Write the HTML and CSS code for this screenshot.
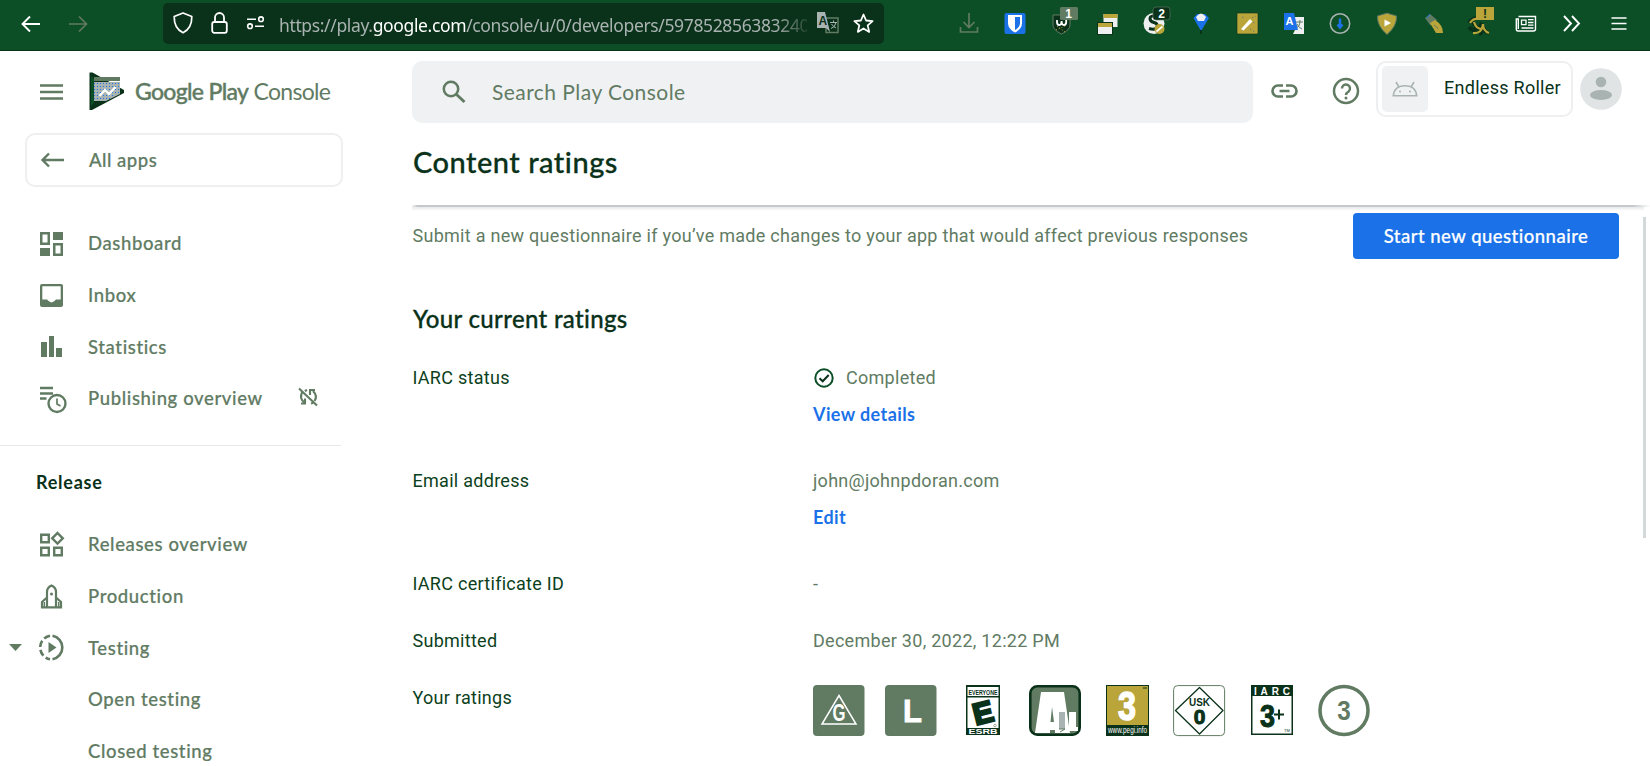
FILE: index.html
```html
<!DOCTYPE html>
<html lang="en">
<head>
<meta charset="utf-8">
<title>Content ratings | Google Play Console</title>
<link rel="stylesheet" href="styles.css">
</head>
<body>
<div class="browser">
  <svg class="nav-arrow" width="20" height="18" viewBox="0 0 20 18"><path d="M19 9H2M9 1.5 1.5 9 9 16.500" fill="none" stroke="#fff" stroke-width="1.900"/></svg>
  <svg class="nav-arrow forward" width="20" height="18" viewBox="0 0 20 18"><path d="M1 9h17M11 1.500 18.500 9 11 16.500" fill="none" stroke="#617b63" stroke-width="1.700"/></svg>
  <div class="url">
    <svg class="shield" width="20" height="22" viewBox="0 0 20 22"><path d="M10 1 18.800 4.500C19 12 16.500 17.500 10 20.700 3.500 17.500 1 12 1.200 4.500Z" fill="none" stroke="#fff" stroke-width="1.700" stroke-linejoin="round"/></svg>
    <svg class="lock" width="17" height="22" viewBox="0 0 17 22"><rect x="1.200" y="10" width="14.600" height="10.800" rx="2" fill="none" stroke="#fff" stroke-width="1.800"/><path d="M4 10V5.500a4.500 4.500 0 0 1 9 0V10" fill="none" stroke="#fff" stroke-width="1.800"/></svg>
    <svg class="perms" width="19" height="14" viewBox="0 0 19 14"><g fill="none" stroke="#fff" stroke-width="1.600"><path d="M1 3.200h9M9 10.200h9"/><circle cx="15" cy="3.200" r="2.300"/><circle cx="4" cy="10.200" r="2.300"/></g></svg>
    <span class="address">https://play.<b>google.com</b>/console/u/0/developers/597852856383240</span>
    <svg class="translate" width="22" height="22" viewBox="0 0 22 22"><rect x="9" y="6" width="12" height="14.500" fill="none" stroke="#617b63" stroke-width="1.500"/><path d="M13 10.500h7M16.500 8.500v2M19 10.500q-1 5-5 6M14.500 12q2 3 4.500 4" stroke="#a9b3b1" fill="none"/><path d="M0 0h8l5 20-4-4H0Z" fill="#a9b3b1"/><text x="1.500" y="12.500" font-size="12" font-weight="700" fill="#0a3119">A</text></svg>
    <svg class="star" width="21" height="21" viewBox="0 0 21 21"><path d="m10.500 1.500 2.600 6 6.500.600-4.900 4.300 1.500 6.500-5.700-3.400-5.700 3.400 1.500-6.500L1.400 8.100l6.500-.6Z" fill="none" stroke="#fff" stroke-width="1.800" stroke-linejoin="round"/></svg>
  </div>
  <div class="extensions">
    <svg viewBox="0 0 30 36"><path d="M15 7v14M9.500 16 15 21.500 20.500 16M6.500 21v5h17v-5" fill="none" stroke="#617b63" stroke-width="1.700"/></svg>
    <svg viewBox="0 0 30 36"><rect x="4.500" y="7" width="21" height="21" rx="2" fill="#1b72e8"/><path d="M8 9h14v8q0 6-7 9.500Q8 23 8 17Z" fill="#fff"/><path d="M15 11h5v6q0 4-5 7Z" fill="#1b72e8"/></svg>
    <svg viewBox="0 0 30 36"><path d="M6 9h17v10q0 5-8.500 9Q6 24 6 19Z" fill="#0a3119" stroke="#617b63"/><path d="M9 24l11-5M10 20l8 6" stroke="#b9a53a" stroke-dasharray="1 2"/><path d="M10 14v2q0 3 2.300 3t2.300-4q0 4 2.300 4t2.300-3v-2" fill="none" stroke="#fff" stroke-width="1.800"/><rect x="13" y="1" width="18" height="13" rx="1.500" fill="#617b63"/><text x="21.500" y="12" text-anchor="middle" font-size="12" font-weight="700" fill="#fff">1</text></svg>
    <svg viewBox="0 0 30 36"><rect x="10.500" y="8" width="14" height="13" fill="#eeeff1"/><rect x="10.500" y="8" width="14" height="4" fill="#b9a53a"/><rect x="4" y="16" width="16" height="13" fill="#0a3119"/><rect x="5" y="17" width="14" height="11" fill="#eeeff1"/><rect x="5" y="17" width="14" height="4" fill="#b9a53a"/></svg>
    <svg viewBox="0 0 30 36"><circle cx="14" cy="17.500" r="10.500" fill="#eeeff1"/><path d="M19 11q-9-2.500-9 1.500 0 3 4 4t3 4q-1 4-8 2" fill="none" stroke="#0a3119" stroke-width="3"/><circle cx="19.500" cy="23" r="5" fill="#b9a53a"/><path d="m16.500 25.500 6-5" stroke="#fff" stroke-width="1.700"/><rect x="13" y="1" width="17" height="13" rx="3" fill="#0a3119" stroke="#617b63" stroke-width=".6"/><text x="21.500" y="12" text-anchor="middle" font-size="12" font-weight="700" fill="#fff">2</text></svg>
    <svg viewBox="0 0 30 36"><path d="m7.500 12 3.500-4h8l4 4-8 13Z" fill="#1b72e8"/><path d="M10 11q5-7 10 0l-2 4h-6Z" fill="#eeeff1"/><path d="M15 24v4" stroke="#0a3119" stroke-width="2"/></svg>
    <svg viewBox="0 0 30 36"><rect x="5" y="7" width="21" height="21" rx="1" fill="#b9a53a" stroke="#0a3119" stroke-width=".6"/><path d="m9 23 9-10 2.500 2.500-9 9Z" fill="#fff"/><path d="m10 11 3 1m7 0 4-2M21 16l3 2m-6 5 5 3" stroke="#617b63" stroke-dasharray="1.500 2"/></svg>
    <svg viewBox="0 0 30 36"><path d="M16 11h9v17H14l2-4Z" fill="#eeeff1"/><path d="M17 16h7m-3-2q0 7-4 8m1-4q2 4 5 5" fill="none" stroke="#617b63"/><path d="M5 7h10l4 17H5Z" fill="#1b72e8"/><text x="6.500" y="19" font-size="11" font-weight="700" fill="#fff">A</text></svg>
    <svg viewBox="0 0 30 36"><circle cx="15" cy="17.500" r="9.700" fill="none" stroke="#a9b3b1" stroke-width="1.500"/><path d="M15 12.500v8m-2.500-2 2.500 3 2.500-3" fill="none" stroke="#1b72e8" stroke-width="2.500"/></svg>
    <svg viewBox="0 0 30 36"><path d="M15 7.200 24.500 10q.5 10-9.500 18.500Q5 20 5.500 10Z" fill="#b9a53a" stroke="#617b63" stroke-linejoin="round"/><path d="M12.500 13.500 19 17l-6.500 3.500Z" fill="#fff"/></svg>
    <svg viewBox="0 0 30 36"><path d="m7 12 5-4 7 6-3 6-4-1Z" fill="#617b63"/><path d="m9 12 3-4" stroke="#1b72e8"/><path d="m12 17 5-3q8 5 8 13h-7Z" fill="#b9a53a"/><path d="M16 19q3 2 4 4" stroke="#617b63" fill="none"/></svg>
    <svg viewBox="0 0 30 36"><path d="M4 17q3-5 9-5M4 21q5 6 11 0l2-4m-9-1q3 6 7 8m-1 4q4-1 4-8 1 6 6 7" fill="none" stroke="#0a3119" stroke-width="4"/><path d="M5 17q3-5 8-4m-4 3q2 7 8 7m-9 4q9 1 10-9 0 7 6 9" fill="none" stroke="#b9a53a" stroke-width="2.200"/><rect x="11" y="1" width="18" height="13" fill="#b9a53a"/><text x="20" y="11.500" text-anchor="middle" font-size="12" font-weight="700" fill="#0a3119">!</text></svg>
    <svg viewBox="0 0 30 36"><path d="M7.500 10.500h17v12.800q0 1.700-2 1.700H7q-1.700 0-1.700-2V13h2v10" fill="none" stroke="#fff" stroke-width="1.400"/><path d="M10.500 14.200h4.500v4.500h-4.500ZM17 13.700h5.500M17 16.500h5.500M17 19.200h5.500M10.500 22h12" fill="none" stroke="#fff" stroke-width="1.300"/></svg>
    <svg viewBox="0 0 30 36"><path d="m7 10 7 7.500L7 25m8-15 7 7.500-7 7.500" fill="none" stroke="#fff" stroke-width="1.900"/></svg>
    <svg viewBox="0 0 30 36"><path d="M7.500 12h15M7.500 17.500h15M7.500 23h15" stroke="#fff" stroke-width="1.600"/></svg>
  </div>
</div>

<div class="app">
  <aside class="sidebar">
    <div class="brand">
      <svg class="burger" width="24" height="16" viewBox="0 0 24 16"><path d="M0 1.500h23M0 8h23M0 14.500h23" stroke="#617b63" stroke-width="2.400"/></svg>
      <svg class="logo" width="36" height="39" viewBox="0 0 36 39"><path d="M.5.500h3L35 18v3L3 38H.5Z" fill="#0a3119"/><path d="M2 4v30l3-3V7Z" fill="#0c4f27"/><path d="M5 5h26v4H5Z" fill="#617b63"/><path d="M5 10h26v12L17 29H5Z" fill="#a9b3b1"/><path d="M5 11.500h26M5 14.500h26M5 17.500h26M5 20.500h26M5 23.500h21M5 26.500h16" stroke="#1b72e8" stroke-width="1" stroke-dasharray="1 2"/><path d="m10.500 24 5.500-6 4 4 6.500-7" fill="none" stroke="#fff" stroke-width="2.400"/></svg>
      <span class="brand-name"><b>Google Play</b> <i>Console</i></span>
    </div>
    <a class="all-apps">
      <svg width="24" height="16" viewBox="0 0 24 16"><path d="M24 8H2.500M9 1.500 2.500 8 9 14.500" fill="none" stroke="#617b63" stroke-width="2.400"/></svg>
      <span>All apps</span>
    </a>
    <nav class="menu">
      <a class="item"><svg viewBox="0 0 28 28"><path fill-rule="evenodd" fill="#617b63" d="M2 2h10v13H2ZM4.500 4.500v8h5v-8ZM15 2h10v8H15ZM2 18h10v8H2ZM15 13h10v13H15ZM17.500 15.500v8h5v-8Z"/></svg><span>Dashboard</span></a>
      <a class="item"><svg viewBox="0 0 28 28"><path fill-rule="evenodd" fill="#617b63" d="M4 2h19q2 0 2 2v19q0 2-2 2H4q-2 0-2-2V4q0-2 2-2ZM4.300 4.300V17.500H9q1.500 2 4.500 3 3-1 4.500-3h4.700V4.300Z"/></svg><span>Inbox</span></a>
      <a class="item"><svg viewBox="0 0 28 28"><path fill="#617b63" d="M3 9h6v15H3ZM11 3h5v21h-5ZM18 15h6v9h-6Z"/></svg><span>Statistics</span></a>
      <a class="item"><svg viewBox="0 0 28 28"><path d="M2 3h13M2 8.500h13M2 13.500h6.500" stroke="#617b63" stroke-width="2.300"/><circle cx="19" cy="18.500" r="8.500" fill="#fff" stroke="#617b63" stroke-width="2.400"/><path d="M19 13.500v5.500l3.500 2" fill="none" stroke="#617b63" stroke-width="1.700"/></svg><span>Publishing overview</span>
        <svg class="sync-off" viewBox="0 0 20 20"><g fill="none" stroke="#617b63" stroke-width="2.100"><path d="m1 1.500 18 17M7 16.500v-5M3 16.500h5M4 5.500q-3 6 2.500 10M12 8V3m-1 0h6m-2 1q5 5 1.500 10M13 16.500l2-.6M6.800 4 9 3"/></g></svg></a>
    </nav>
    <nav class="menu release">
      <h3>Release</h3>
      <a class="item"><svg viewBox="0 0 28 28"><g fill="none" stroke="#617b63" stroke-width="2.400"><path d="M3.200 3.700h7.600v7.600H3.200ZM3.200 16.700h7.600v7.600H3.200ZM16.200 16.700h7.600v7.600h-7.600ZM19.500 2l5.300 5.300-5.300 5.300-5.300-5.300Z"/></g></svg><span>Releases overview</span></a>
      <a class="item"><svg viewBox="0 0 28 28"><g fill="none" stroke="#617b63" stroke-width="2.200"><path d="M9 24.500V9q0-4.500 4.500-6.500Q18 4.500 18 9v15.500M9 14.500 4 19v5.400h19V19l-5-4.500"/><path d="M6.300 19v5M20.700 19v5" stroke-width="1.500"/></g><circle cx="13.500" cy="11" r="1.500" fill="#617b63"/></svg><span>Production</span></a>
      <a class="item"><svg class="caret" viewBox="0 0 14 8"><path d="M0 0h13L6.500 7Z" fill="#617b63"/></svg><svg viewBox="0 0 28 28"><path d="M14.500 1.700a12 12 0 0 1 0 23.600" fill="none" stroke="#617b63" stroke-width="2.600"/><path d="M12 1.700a12 12 0 0 0 0 23.600" fill="none" stroke="#617b63" stroke-width="2.600" stroke-dasharray="6.500 3"/><path d="M10.500 8v11l8-5.500Z" fill="#617b63"/></svg><span>Testing</span></a>
      <a class="item sub"><span>Open testing</span></a>
      <a class="item sub"><span>Closed testing</span></a>
    </nav>
  </aside>

  <main class="main">
    <header class="top">
      <div class="search">
        <svg width="24" height="24" viewBox="0 0 24 24"><circle cx="9" cy="9" r="7.200" fill="none" stroke="#617b63" stroke-width="2.500"/><path d="m14 14 8.500 8" stroke="#617b63" stroke-width="3"/></svg>
        <span>Search Play Console</span>
      </div>
      <svg class="link" width="27" height="14" viewBox="0 0 27 14"><path d="M12 1.500H7a5.500 5.500 0 0 0 0 11h5M15 1.500h5a5.500 5.500 0 0 1 0 11h-5M8.500 7h10" fill="none" stroke="#617b63" stroke-width="2.700"/></svg>
      <svg class="help" width="28" height="28" viewBox="0 0 28 28"><circle cx="14" cy="14" r="12" fill="none" stroke="#617b63" stroke-width="2.500"/><path d="M10 11.500a4 4 0 1 1 6.600 3q-2.600 1.600-2.600 3.500" fill="none" stroke="#617b63" stroke-width="2.400"/><circle cx="14" cy="21" r="1.500" fill="#617b63"/></svg>
      <div class="chip">
        <div class="thumb"><svg width="26" height="16" viewBox="0 0 26 16"><path d="M1.300 14.700q1-10 11.700-10t11.700 10ZM4 1l3 5M22 1l-3 5" fill="none" stroke="#a9b3b1" stroke-width="1.600"/><circle cx="8" cy="10.500" r="1" fill="#a9b3b1"/><circle cx="18" cy="10.500" r="1" fill="#a9b3b1"/></svg></div>
        <span>Endless Roller</span>
      </div>
      <svg class="avatar" width="42" height="42" viewBox="0 0 42 42"><circle cx="21" cy="21" r="20.800" fill="#e0e4e5"/><circle cx="21" cy="14" r="5.300" fill="#a9b3b1"/><ellipse cx="21" cy="27" rx="11" ry="5" fill="#a9b3b1"/></svg>
    </header>
    <h1>Content ratings</h1>
    <section class="panel">
      <div class="content">
        <div class="notice">
          <p>Submit a new questionnaire if you’ve made changes to your app that would affect previous responses</p>
          <button>Start new questionnaire</button>
        </div>
        <h2>Your current ratings</h2>
        <dl>
          <div class="row tall"><dt>IARC status</dt><dd><span class="done"><svg width="22" height="22" viewBox="0 0 22 22"><circle cx="11" cy="11" r="8.700" fill="none" stroke="#0c4f27" stroke-width="2"/><path d="m6.500 11.300 3.200 3 6-6.300" fill="none" stroke="#0a3119" stroke-width="2"/></svg><span>Completed</span></span><a>View details</a></dd></div>
          <div class="row tall"><dt>Email address</dt><dd><span>john@johnpdoran.com</span><a>Edit</a></dd></div>
          <div class="row"><dt>IARC certificate ID</dt><dd><span>-</span></dd></div>
          <div class="row"><dt>Submitted</dt><dd><span>December 30, 2022, 12:22 PM</span></dd></div>
          <div class="row"><dt>Your ratings</dt><dd class="badges">
            <svg width="52" height="52" viewBox="0 0 52 52"><rect width="51.500" height="51" rx="4" fill="#617b63"/><path d="M26 10.500 43 39H9Z" fill="none" stroke="#fff" stroke-width="1.500"/><text x="26" y="36" text-anchor="middle" font-size="23" font-weight="700" fill="#fff" textLength="13" lengthAdjust="spacingAndGlyphs">G</text></svg>
            <svg width="52" height="52" viewBox="0 0 52 52"><rect width="51.500" height="51" rx="4" fill="#617b63"/><text x="18" y="36.500" font-size="31" font-weight="700" fill="#fff" stroke="#fff" stroke-width=".8">L</text></svg>
            <svg width="34" height="52" viewBox="0 0 34 52"><rect width="34" height="50" fill="#0a3119"/><path d="M1.500 2h31v9h-31ZM1.500 12.500h31V43h-31Z" fill="#fff"/><text x="17" y="9.700" text-anchor="middle" font-size="8" font-weight="700" fill="#0a3119" textLength="29" lengthAdjust="spacingAndGlyphs">EVERYONE</text><text x="17" y="38" text-anchor="middle" font-size="30" font-weight="700" fill="#0a3119" stroke="#0a3119" stroke-width="2.500" transform="rotate(-14 17 28)">E</text><text x="17" y="49" text-anchor="middle" font-size="7" font-weight="700" fill="#fff" textLength="29" lengthAdjust="spacingAndGlyphs">ESRB</text><circle cx="29" cy="40.500" r="1.300" fill="none" stroke="#617b63" stroke-width=".6"/></svg>
            <svg width="52" height="52" viewBox="0 0 52 52"><rect x="1.300" y="1.300" width="49.400" height="48.400" rx="7" fill="#617b63" stroke="#0a3119" stroke-width="2.600"/><path fill-rule="evenodd" d="M12 7h23l6 41H26v-3h-5v3H6ZM23 22l-1.500 15H25Z" fill="#fff"/><path d="M30 27h6v17h-6Z" fill="#a9b3b1"/><path d="M40 27h7v15h2v4H36v-4h4Z" fill="#fff"/><path d="M30 44h6l-5 3" stroke="#617b63" fill="none"/></svg>
            <svg width="43" height="52" viewBox="0 0 43 52"><rect width="43" height="51" fill="#0a3119"/><rect x="1" y="1" width="41" height="39" fill="#b9a53a"/><text x="21" y="35" text-anchor="middle" font-size="40" font-weight="700" fill="#fff" stroke="#fff" stroke-width="1.500" textLength="18" lengthAdjust="spacingAndGlyphs">3</text><text x="21.500" y="48" text-anchor="middle" font-size="8.500" fill="#fff" textLength="39" lengthAdjust="spacingAndGlyphs">www.pegi.info</text><path d="M37 3h4" stroke="#0a3119"/></svg>
            <svg width="53" height="52" viewBox="0 0 53 52"><rect x=".6" y=".6" width="51" height="50" rx="4" fill="#fff" stroke="#617b63"/><path d="M26.500 2.500 50 25.500 26.500 49 2.500 25.500Z" fill="none" stroke="#0a3119" stroke-width="1.300" stroke-linejoin="round"/><text x="26.500" y="21" text-anchor="middle" font-size="10" font-weight="700" fill="#0a3119" textLength="21" lengthAdjust="spacingAndGlyphs">USK</text><text x="26.500" y="39" text-anchor="middle" font-size="21" font-weight="700" fill="#0a3119" stroke="#0a3119">0</text></svg>
            <svg width="42" height="52" viewBox="0 0 42 52"><rect width="42" height="50" fill="#0a3119"/><rect x="1.500" y="11" width="39" height="37.500" fill="#fff"/><text x="3" y="9.500" font-size="10" font-weight="700" fill="#fff" textLength="36">IARC</text><text x="9" y="41.500" font-size="32" font-weight="700" fill="#0a3119" stroke="#0a3119" textLength="15" lengthAdjust="spacingAndGlyphs">3</text><path d="M23 29.500h10M28 24.500v10" stroke="#0a3119" stroke-width="2"/><text x="33" y="47" font-size="4" fill="#0a3119">TM</text></svg>
            <svg width="52" height="52" viewBox="0 0 52 52"><circle cx="26" cy="25.500" r="24" fill="none" stroke="#617b63" stroke-width="3.600"/><text x="26" y="34.500" text-anchor="middle" font-size="28" font-weight="700" fill="#617b63" textLength="13.500" lengthAdjust="spacingAndGlyphs">3</text></svg>
          </dd></div>
        </dl>
      </div>
      <div class="scrollbar"></div>
    </section>
  </main>
</div>
</body>
</html>
```
FILE: styles.css
```css
* { box-sizing: border-box; }
html, body { margin: 0; height: 100%; overflow: hidden; }
body { background: #fff; color: #617b63; font-family: Roboto, "Liberation Sans", sans-serif; font-size: 18px; letter-spacing: .28px; }
svg { display: block; flex: none; overflow: visible; font-family: "Liberation Sans", sans-serif; letter-spacing: 0; }
h1, h2, h3, p, dl, dt, dd { margin: 0; }

.browser { display: flex; align-items: center; height: 51px; padding-right: 8px; background: #0c4f27; border-bottom: 1px solid #0a3119; }
.nav-arrow { margin: -2px 0 0 21px; }
.nav-arrow.forward { margin-left: 27px; }
.url { display: flex; align-items: center; width: 721px; height: 41px; margin: -4px 0 0 75px; padding-left: 10px; border-radius: 5px; background: #0a3119; }
.lock { margin-left: 18px; }
.perms { margin-left: 18px; }
.address { width: 528px; margin-left: 14px; padding-top: 3px; white-space: nowrap; font-family: "Noto Sans", "Open Sans", sans-serif; font-size: 17.5px; letter-spacing: -.36px; color: #a9b3b1; -webkit-mask-image: linear-gradient(90deg, #000 94%, transparent 101%); mask-image: linear-gradient(90deg, #000 94%, transparent 101%); }
.address b { font-weight: 400; color: #fff; }
.translate { margin-left: 10px; }
.star { margin-left: 14px; }
.extensions { display: grid; grid-template-columns: repeat(15, 46.43px); justify-items: center; margin: -2px 0 0 auto; }
.extensions svg { width: 30px; height: 36px; }

.app { display: flex; height: 715px; }
.sidebar { width: 412px; flex: none; font-family: Lato, Roboto, sans-serif; letter-spacing: .62px; }
.brand { display: flex; align-items: center; height: 82px; padding: 0 0 2px 40px; }
.burger { margin-top: 1px; }
.logo { margin-left: 25px; }
.brand-name { margin-left: 10px; font-size: 23px; letter-spacing: -.68px; white-space: nowrap; }
.brand-name b { font-weight: 500; -webkit-text-stroke: .4px #617b63; }
.brand-name i { font-style: normal; font-weight: 400; }
.all-apps { display: flex; align-items: center; gap: 25px; width: 318px; height: 54px; margin-left: 25px; padding: 0 0 1px 15px; border: 2px solid #eeeff1; border-radius: 10px; font-size: 18.500px; font-weight: 500; letter-spacing: .5px; -webkit-text-stroke: .2px #617b63; }
.all-apps svg { margin-left: -2px; }
.menu { width: 341px; padding-top: 31px; height: 259px; border-bottom: 1px solid #e6e8ea; }
.item { display: flex; align-items: center; height: 51.700px; padding-left: 38px; font-size: 18.500px; font-weight: 500; white-space: nowrap; -webkit-text-stroke: .2px #617b63; }
.item span { margin-top: -1px; }
.item svg { width: 28px; height: 28px; margin-right: 22px; }
.item .sync-off { width: 20px; height: 20px; margin: -4px 0 0 35px; }
.item .caret { width: 14px; height: 8px; margin: 0 15px 0 -29px; }
.item.sub { padding-left: 88px; }
.release { height: 320px; border: 0; padding-top: 24px; }
.release h3 { height: 49px; padding-left: 36px; font-size: 18px; line-height: 24px; letter-spacing: .75px; color: #0a3119; }

.main { flex: 1; min-width: 0; }
.top { display: flex; align-items: center; height: 72px; padding-top: 8px; }
.search { display: flex; align-items: center; gap: 26px; width: 841px; height: 62px; margin-top: 1px; padding-left: 30px; border-radius: 10px; background: #f0f1f3; font-family: Lato, sans-serif; font-size: 21px; letter-spacing: .45px; }
.search span { margin-top: -1px; }
.link { margin-left: 18px; }
.help { margin-left: 34px; }
.chip { display: flex; align-items: center; width: 197px; height: 56px; margin: -5px 0 0 16px; padding-left: 4px; border: 2px solid #eeeff1; border-radius: 10px; color: #0a3119; white-space: nowrap; }
.chip span { margin: -2px 0 0 1px; }
.thumb { display: grid; place-items: center; width: 46px; height: 46px; margin-right: 15px; border-radius: 5px; background: #f0f1f3; }
.avatar { margin: -5px 0 0 7px; }
h1 { height: 82px; padding: 21px 0 0 1px; font: 500 29px/36px Lato, sans-serif; letter-spacing: .5px; color: #0a3119; -webkit-text-stroke: .3px #0a3119; }
.panel { display: flex; justify-content: space-between; border-top: 2px solid #c3c9ca; border-image: linear-gradient(90deg, #fff, #c3c9ca .5% 98.500%, #fff) 1; background: linear-gradient(#e6e8ea, #fff) 0 0 / 99.500% 4px no-repeat; }
.content { width: 1207px; }
.notice { display: flex; align-items: center; justify-content: space-between; padding-top: 6px; }
.notice p { margin-top: -1px; padding-left: .5px; white-space: nowrap; }
button { width: 266px; height: 46px; border: 0; border-radius: 4px; background: #1b72e8; color: #fff; font: 500 18.500px Lato, sans-serif; letter-spacing: .48px; -webkit-text-stroke: .2px #fff; }
h2 { padding: 44px 0 0 1px; height: 105px; font: 500 24px/32px Lato, sans-serif; letter-spacing: .33px; color: #0a3119; -webkit-text-stroke: .3px #0a3119; }
.row { display: grid; grid-template-columns: 400px 1fr; height: 57px; line-height: 28px; }
.row.tall { height: 103px; }
.row dt { padding-left: .5px; color: #0c3f20; }
.row dd { display: flex; flex-direction: column; align-items: flex-start; gap: 8px; padding-left: 1px; white-space: nowrap; }
.row a { color: #1b72e8; font-family: Lato, sans-serif; font-weight: 700; letter-spacing: .4px; }
.done { display: flex; align-items: center; gap: 11px; }
.row .badges { flex-direction: row; gap: 0; padding: 1px 0 0 1px; }
.badges svg:nth-child(2) { margin-left: 20px; }
.badges svg:nth-child(3) { margin-left: 29px; }
.badges svg:nth-child(4) { margin-left: 29px; }
.badges svg:nth-child(5) { margin-left: 25px; }
.badges svg:nth-child(6) { margin-left: 24px; }
.badges svg:nth-child(7) { margin-left: 25px; }
.badges svg:nth-child(8) { margin-left: 25px; }
.scrollbar { width: 3px; height: 321px; margin: 10px 4px 0 0; background: #d3d8d9; }
```
